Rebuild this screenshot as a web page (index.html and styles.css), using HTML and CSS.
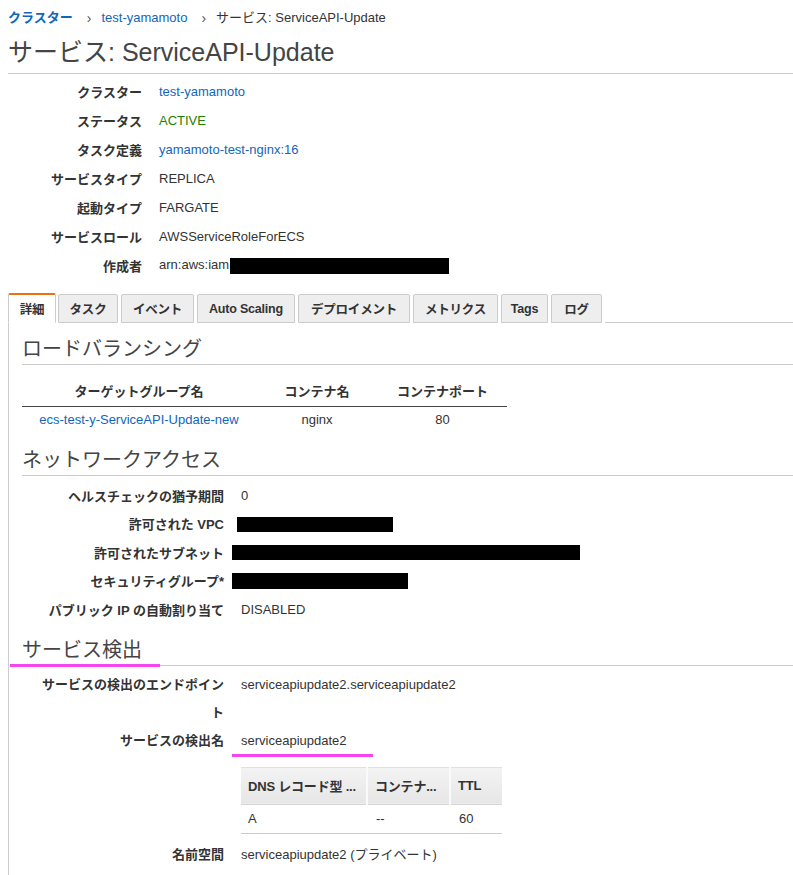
FILE: index.html
```html
<!DOCTYPE html>
<html lang="ja">
<head>
<meta charset="utf-8">
<title>サービス: ServiceAPI-Update</title>
<link rel="stylesheet" href="styles.css">
</head>
<body>
<nav class="crumbs">
  <a class="crumb-root" href="#">クラスター</a>
  <span class="sep">›</span>
  <a href="#">test-yamamoto</a>
  <span class="sep">›</span>
  <span>サービス: ServiceAPI-Update</span>
</nav>
<h1 class="title">サービス: ServiceAPI-Update</h1>

<dl class="kv kv-top">
  <dt>クラスター</dt><dd><a href="#">test-yamamoto</a></dd>
  <dt>ステータス</dt><dd class="ok">ACTIVE</dd>
  <dt>タスク定義</dt><dd><a href="#">yamamoto-test-nginx:16</a></dd>
  <dt>サービスタイプ</dt><dd>REPLICA</dd>
  <dt>起動タイプ</dt><dd>FARGATE</dd>
  <dt>サービスロール</dt><dd>AWSServiceRoleForECS</dd>
  <dt>作成者</dt><dd>arn:aws:iam<span class="redact r-arn"></span></dd>
</dl>

<div class="tabs">
  <span class="tab active t-detail">詳細</span>
  <span class="tab t-task">タスク</span>
  <span class="tab t-event">イベント</span>
  <span class="tab t-as">Auto Scaling</span>
  <span class="tab t-deploy">デプロイメント</span>
  <span class="tab t-metric">メトリクス</span>
  <span class="tab t-tags">Tags</span>
  <span class="tab t-log">ログ</span>
  <span class="tab-fill"></span>
</div>

<div class="panel">
  <h2 class="section first">ロードバランシング</h2>
  <table class="lb">
    <thead>
      <tr><th class="c1">ターゲットグループ名</th><th class="c2">コンテナ名</th><th class="c3">コンテナポート</th></tr>
    </thead>
    <tbody>
      <tr><td><a href="#">ecs-test-y-ServiceAPI-Update-new</a></td><td>nginx</td><td>80</td></tr>
    </tbody>
  </table>

  <h2 class="section">ネットワークアクセス</h2>
  <dl class="kv kv-net">
    <dt>ヘルスチェックの猶予期間</dt><dd>0</dd>
    <dt>許可された VPC</dt><dd><span class="redact r-vpc"></span></dd>
    <dt>許可されたサブネット</dt><dd><span class="redact r-subnet"></span></dd>
    <dt>セキュリティグループ*</dt><dd><span class="redact r-sg"></span></dd>
    <dt>パブリック IP の自動割り当て</dt><dd>DISABLED</dd>
  </dl>

  <h2 class="section sd">サービス検出<span class="mark mark-h"></span></h2>
  <dl class="kv kv-net kv-sd">
    <dt>サービスの検出のエンドポイント</dt><dd>serviceapiupdate2.serviceapiupdate2</dd>
    <dt>サービスの検出名</dt><dd class="marked">serviceapiupdate2<span class="mark mark-v"></span></dd>
    <dt class="empty"></dt>
    <dd class="tbl-cell">
      <table class="dns">
        <thead><tr><th class="d1">DNS レコード型 ...</th><th class="d2">コンテナ...</th><th class="d3">TTL</th></tr></thead>
        <tbody><tr><td>A</td><td>--</td><td>60</td></tr></tbody>
      </table>
    </dd>
    <dt>名前空間</dt><dd>serviceapiupdate2 (プライベート)</dd>
  </dl>
</div>
</body>
</html>
```

FILE: styles.css
```css
* { box-sizing: border-box; }

body {
  margin: 0;
  font-family: "Liberation Sans", "Noto Sans CJK JP", sans-serif;
  font-size: 13px;
  color: #333;
  background: #fff;
  overflow: hidden;
}

a { color: #1166bb; text-decoration: none; }

.crumbs {
  display: flex;
  align-items: center;
  height: 20px;
  margin: 8px 0 0 8px;
  line-height: 20px;
}
.crumbs .crumb-root { font-weight: bold; }
.crumbs .sep { color: #555; margin: 0 10px 0 14px; font-size: 14px; }

.title {
  margin: 8px 0 0 8px;
  padding-bottom: 5px;
  font-size: 25px;
  line-height: 32px;
  font-weight: normal;
  color: #444;
  border-bottom: 1px solid #ccc;
}

.kv {
  display: grid;
  margin: 0;
  align-items: center;
}
.kv dt {
  font-weight: bold;
  text-align: right;
  color: #333;
}
.kv dd { margin: 0; color: #333; }

.kv-top {
  grid-template-columns: 134px 1fr;
  column-gap: 17px;
  grid-auto-rows: 29px;
  margin-top: 3px;
  margin-left: 8px;
}
.kv-top .ok { color: #1d8102; }

.redact { display: inline-block; background: #000; vertical-align: middle; }
.r-arn { width: 219px; height: 16px; margin-left: 1px; }
.r-vpc { width: 156px; height: 15px; margin-left: -4px; }
.r-subnet { width: 348px; height: 15px; margin-left: -9px; }
.r-sg { width: 176px; height: 16px; margin-left: -9px; }

.tabs {
  display: flex;
  align-items: flex-end;
  margin: 13px 0 0 8px;
  height: 30px;
}
.tab {
  display: flex;
  align-items: center;
  justify-content: center;
  height: 29px;
  padding: 0;
  margin-right: 3px;
  background: #eee;
  border: 1px solid #ccc;
  border-radius: 2px 2px 0 0;
  font-weight: bold;
  font-size: 12.5px;
  letter-spacing: -0.2px;
  color: #333;
}
.tab.active {
  background: #fff;
  border-top: 2px solid #ec7211;
  border-bottom-color: #fff;
  height: 30px;
  margin-right: 2px;
}
.t-detail { width: 48px; }
.t-task { width: 60px; }
.t-event { width: 73px; }
.t-as { width: 98px; }
.t-deploy { width: 112px; }
.t-metric { width: 85px; }
.t-tags { width: 47px; }
.t-log { width: 51px; }
.tab-fill { flex: 1; border-bottom: 1px solid #ccc; height: 1px; }

.panel {
  margin-left: 8px;
  border-left: 1px solid #ccc;
  padding-left: 13px;
  padding-top: 14px;
  padding-bottom: 20px;
}

.section {
  position: relative;
  margin: 16px 0 0 0;
  padding-bottom: 3px;
  font-size: 20px;
  line-height: 24px;
  font-weight: normal;
  color: #444;
  border-bottom: 1px solid #ccc;
}
.section.first { margin-top: 0; }
.section.sd { margin-top: 14px; }

.lb {
  border-collapse: collapse;
  margin-top: 11px;
}
.lb th {
  font-weight: bold;
  height: 30px;
  border-bottom: 1px solid #444;
  text-align: center;
  padding: 0;
}
.lb td {
  height: 26px;
  text-align: center;
  padding: 0;
}
.lb .c1 { width: 234px; }
.lb .c2 { width: 122px; }
.lb .c3 { width: 129px; }

.kv-net {
  grid-template-columns: 188px 1fr;
  column-gap: 17px;
  grid-auto-rows: 28.5px;
  margin-left: 14px;
  margin-top: 5px;
}

.kv-sd {
  grid-auto-rows: auto;
  margin-top: 5px;
}
.kv-sd dt, .kv-sd dd { line-height: 28px; }
.kv-sd dt { align-self: start; }
.kv-sd dd { align-self: start; }
.kv-sd .tbl-cell { margin-top: 12px; margin-left: 0; line-height: normal; }
.kv-sd .tbl-cell + dt, .kv-sd .tbl-cell + dt + dd { margin-top: 7px; }

.marked { position: relative; }
.mark {
  position: absolute;
  background: #f545f0;
  height: 3px;
}
.mark-h { left: -12px; width: 150px; bottom: -2px; }
.mark-v { left: -9px; width: 141px; top: 27px; }

.dns {
  border-collapse: collapse;
  width: 261px;
}
.dns th {
  height: 37px;
  text-align: left;
  font-weight: bold;
  padding: 0 0 0 7px;
  background: linear-gradient(#f3f3f3, #e6e6e6);
  border-top: 1px solid #e0e0e0;
  border-left: 2px solid #fafafa;
  border-bottom: 1px solid #d5d5d5;
  white-space: nowrap;
  letter-spacing: -0.2px;
}
.dns th.d1 { border-left: none; width: 126px; }
.dns th.d2 { width: 83px; }
.dns td {
  height: 29px;
  padding: 0 0 0 7px;
  border-bottom: 1px solid #ccc;
}
.dns td + td { padding-left: 9px; }
```
